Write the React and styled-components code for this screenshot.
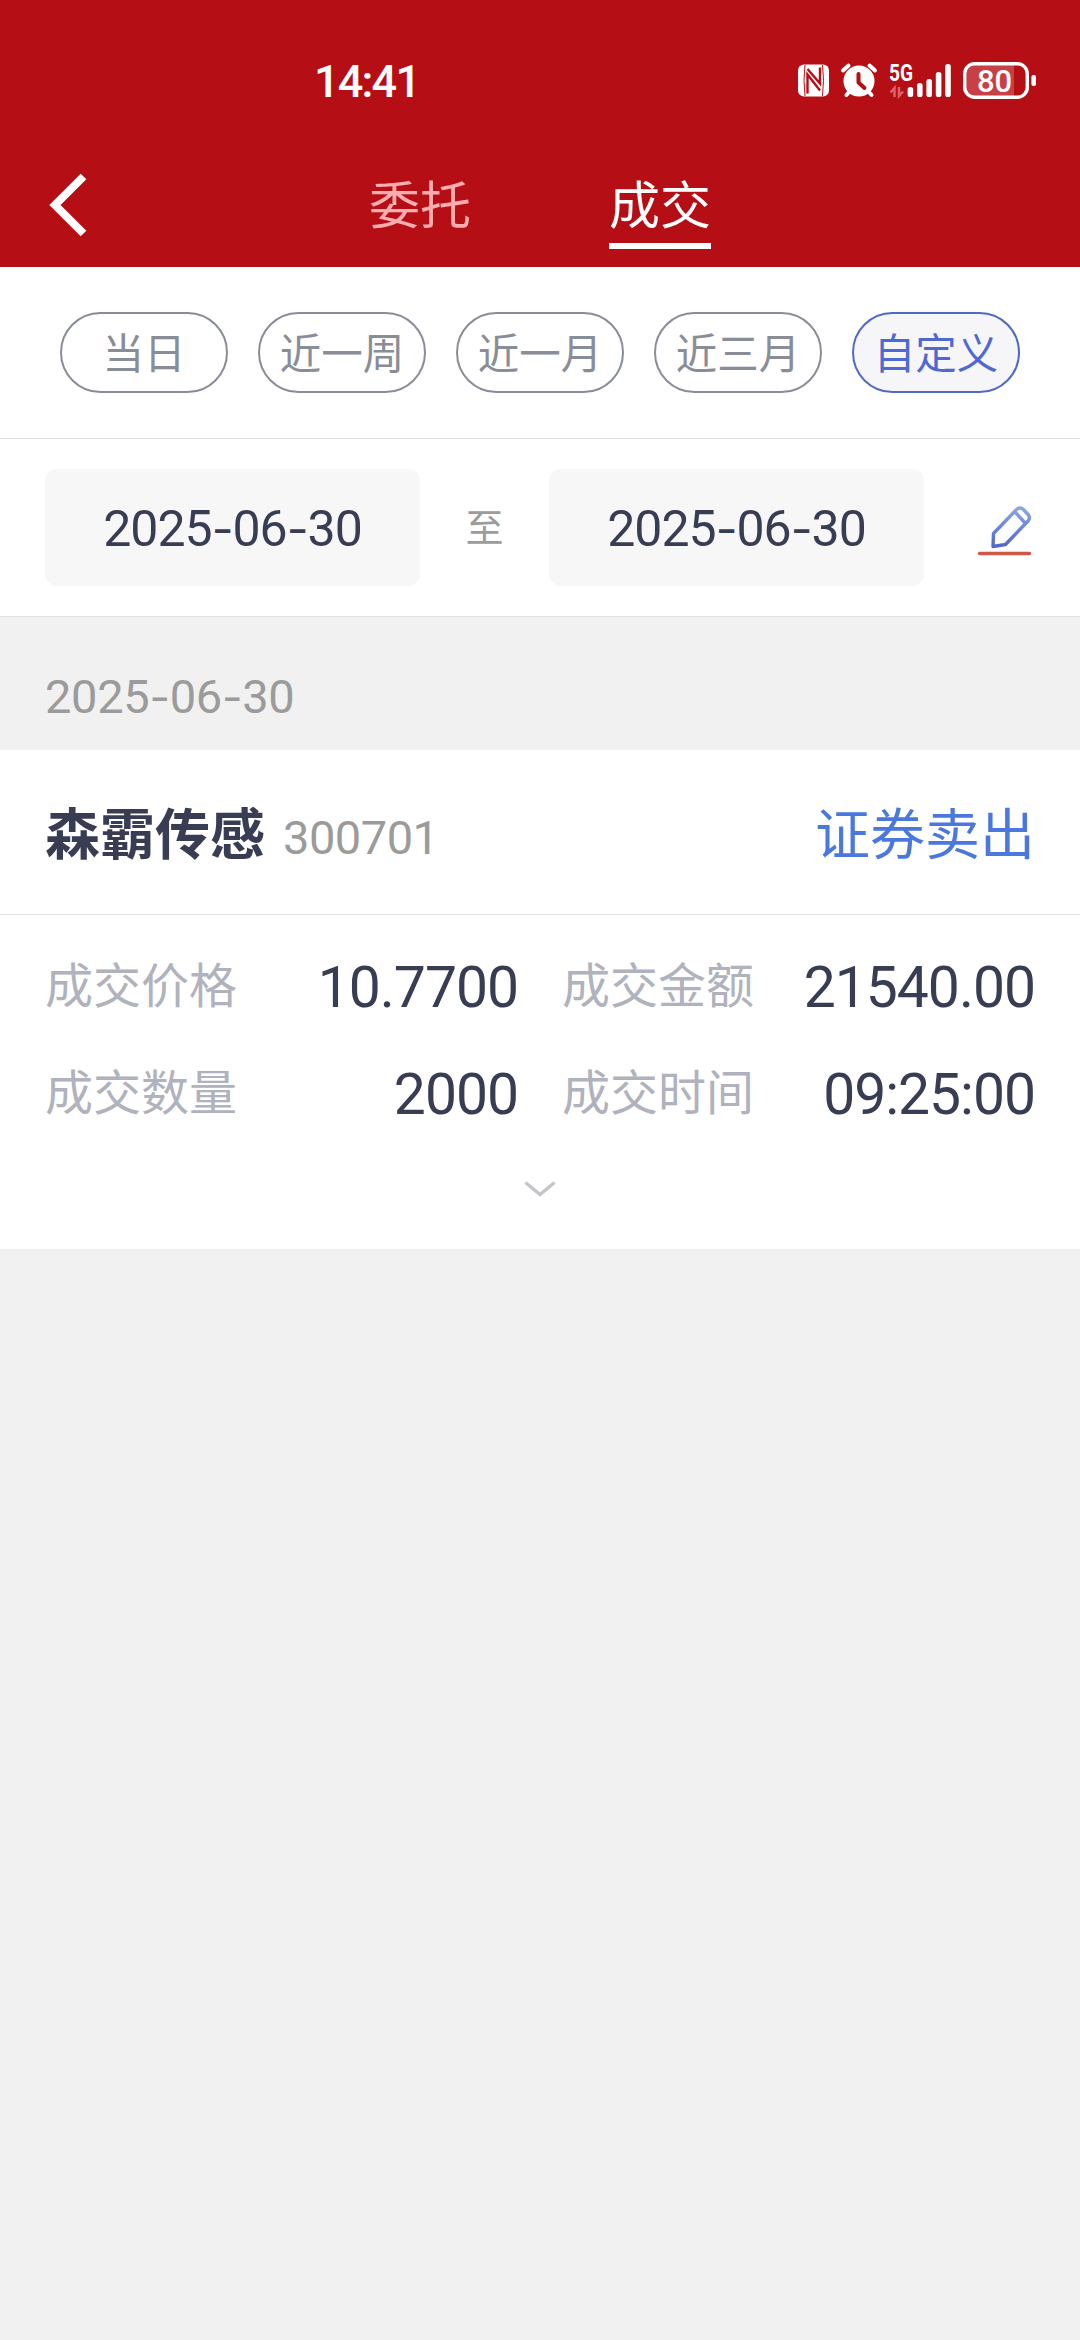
import React from 'react';
import styled, { createGlobalStyle } from 'styled-components';

const GlobalStyle = createGlobalStyle`
	* {
		box-sizing: border-box;
	}

	body {
		margin: 0;
		background-color: #f1f1f1;
		font-family: 'Noto Sans CJK SC', 'Noto Sans', sans-serif;
	}

	svg {
		display: block;
		overflow: visible;
	}
`;

const Page = styled.div`
	width: 1080px;
	min-height: 2340px;
	background-color: #f1f1f1;
`;

const Header = styled.header`
	height: 267px;
	background-color: #b50f15;
	color: white;
`;

const StatusBar = styled.div`
	height: 142px;
	padding: 18px 44px 0 314px;
	display: flex;
	justify-content: space-between;
	align-items: center;
`;

const Clock = styled.span`
	padding-top: 3px;
	font-family: Roboto, sans-serif;
	font-size: 45px;
	line-height: 60px;
	font-weight: 500;
	letter-spacing: -1.8px;
`;

const NavBar = styled.div`
	height: 125px;
	padding: 0 45px;
	display: grid;
	grid-template-columns: 1fr auto 1fr;
	align-items: center;
`;

const BackButton = styled.button`
	border: 0;
	padding: 0;
	background: none;
	justify-self: start;
`;

const Tabs = styled.nav`
	display: flex;
	gap: 138px;
	padding-bottom: 1px;
`;

const Tab = styled.a`
	height: 90px;
	font-size: 51px;
	line-height: 86px;
	color: ${({ $active }) => ($active ? 'white' : '#fbadaf')};
	border-bottom: 6px solid ${({ $active }) => ($active ? 'white' : 'transparent')};
`;

const FilterRow = styled.div`
	height: 172px;
	padding: 45px 60px 0;
	display: flex;
	gap: 30px;
	background-color: white;
	border-bottom: 1px solid #e2e3e5;
`;

const Chip = styled.button`
	width: 168px;
	height: 81px;
	padding: 0 0 4px;
	border: 2px solid ${({ $active }) => ($active ? '#5069c4' : '#898d98')};
	border-radius: 41px;
	background-color: ${({ $active }) => ($active ? '#f6f6f8' : 'white')};
	color: ${({ $active }) => ($active ? '#4e69d0' : '#898d98')};
	font-family: inherit;
	font-size: 41.5px;
	line-height: 60px;
`;

const DateRow = styled.div`
	height: 178px;
	padding: 0 45px;
	display: flex;
	align-items: center;
	background-color: white;
	border-bottom: 1px solid #e1e1e1;
`;

const DateField = styled.div`
	width: 375px;
	height: 117px;
	border-radius: 12px;
	background-color: #f7f7f8;
	color: #383d54;
	font-family: Roboto, sans-serif;
	font-size: 50px;
	line-height: 120px;
	letter-spacing: -1px;
	text-align: center;
`;

const Dash = styled.span`
	font-family: Inter, sans-serif;
	font-size: 0.95em;
	line-height: 1;
`;

const DateSeparator = styled.span`
	width: 129px;
	padding-bottom: 6px;
	text-align: center;
	font-size: 38px;
	color: #9c9c9c;
`;

const EditButton = styled.button`
	border: 0;
	padding: 5px 0 0;
	margin-left: auto;
	background: none;
`;

const GroupDate = styled.div`
	height: 133px;
	padding: 27px 45px 0;
	font-family: Roboto, sans-serif;
	font-size: 47px;
	line-height: 106px;
	letter-spacing: -0.3px;
	color: #9b9b9b;
`;

const Card = styled.section`
	height: 499px;
	background-color: white;
`;

const CardHeader = styled.div`
	height: 165px;
	padding: 0 45px;
	display: flex;
	align-items: center;
	border-bottom: 1px solid #e3e3e3;
`;

const StockName = styled.span`
	padding-bottom: 5px;
	font-size: 55px;
	line-height: 80px;
	font-weight: 700;
	color: #383d54;
`;

const StockCode = styled.span`
	margin-left: 18px;
	padding-top: 11px;
	font-family: Roboto, sans-serif;
	font-size: 47px;
	line-height: 60px;
	letter-spacing: -0.5px;
	color: #9b9b9b;
`;

const TradeType = styled.span`
	margin-left: auto;
	padding-bottom: 5px;
	font-size: 55px;
	line-height: 80px;
	color: #4b78dd;
`;

const Details = styled.div`
	padding: 17px 45px 0;
	display: grid;
	grid-template-columns: 1fr 1fr;
	grid-auto-rows: 107px;
	column-gap: 44px;
`;

const Detail = styled.div`
	display: flex;
	justify-content: space-between;
	align-items: center;
`;

const DetailLabel = styled.span`
	padding-bottom: 7px;
	font-size: 48px;
	line-height: 70px;
	color: #b0b2bd;
`;

const DetailValue = styled.span`
	padding-top: 4px;
	font-family: Roboto, sans-serif;
	font-size: 57px;
	line-height: 70px;
	letter-spacing: -1px;
	color: #383d54;
`;

const ExpandButton = styled.button`
	display: block;
	margin: 35px auto 0;
	border: 0;
	padding: 0;
	background: none;
`;

const filters = ['当日', '近一周', '近一月', '近三月', '自定义'];

const details = [
	{ label: '成交价格', value: '10.7700' },
	{ label: '成交金额', value: '21540.00' },
	{ label: '成交数量', value: '2000' },
	{ label: '成交时间', value: '09:25:00' },
];

const signalBars = [
	{ x: 111.6, y: 27 },
	{ x: 121, y: 23 },
	{ x: 130.4, y: 19 },
	{ x: 139.8, y: 12 },
	{ x: 149.2, y: 4 },
];

function StatusIcons() {
	return (
		<svg width="240" height="40" viewBox="0 0 240 40" fill="none">
			{/* nfc */}
			<rect x="2" y="4.5" width="31" height="32" rx="6" fill="white" />
			<path d="M11.5 33.5V14.5L24 30.500" stroke="#b50f15" strokeWidth="2.400" />
			<path d="M24 7.500V23.500L11.500 9" stroke="#b50f15" strokeWidth="2.400" />
			<path d="M9 5Q7 20 9 36M26.500 5Q28.500 20 26.500 36" stroke="#b50f15" strokeWidth="1" />
			{/* alarm */}
			<circle cx="63" cy="21" r="15.5" fill="white" />
			<path d="M47 10.5L52.5 5.5M79 10.5L73.5 5.5M50.500 35L54 31M75.500 35L72 31" stroke="white" strokeWidth="4" strokeLinecap="round" />
			<path d="M62.500 14V22.500L68.500 28" stroke="#b50f15" strokeWidth="4" strokeLinecap="round" strokeLinejoin="round" />
			{/* mobile signal */}
			<text x="93" y="21" fill="white" fontFamily="Roboto, sans-serif" fontSize="23" fontWeight="700" textLength="24" lengthAdjust="spacingAndGlyphs">
				5G
			</text>
			<path d="M98.500 37V28L94.500 32.500M103 27V36L107 31.500" stroke="#d9626a" strokeWidth="2.500" />
			{signalBars.map((bar) => (
				<rect key={bar.x} x={bar.x} y={bar.y} width="5.600" height={37 - bar.y} rx="2.600" fill="white" />
			))}
			{/* battery */}
			<path d="M176 5H218V36H176A8 8 0 0 1 169 29V12A8 8 0 0 1 176 5Z" fill="#c64046" />
			<rect x="168.700" y="3.700" width="62.600" height="33.600" rx="10" stroke="white" strokeWidth="3.400" />
			<rect x="235.400" y="15" width="4.600" height="11" rx="2" fill="white" />
			<text x="198.500" y="31.500" fill="white" fontFamily="Roboto, sans-serif" fontSize="31" fontWeight="500" textAnchor="middle">
				80
			</text>
		</svg>
	);
}

function BackIcon() {
	return (
		<svg width="45" height="64" viewBox="0 0 45 64" fill="none">
			<path d="M38.500 3.500L10 32L38.500 60.500" stroke="white" strokeWidth="8" />
		</svg>
	);
}

function EditIcon() {
	return (
		<svg width="60" height="56" viewBox="0 0 60 56" fill="none">
			<defs>
				<linearGradient id="pencil" x1="0" y1="0" x2="0" y2="1">
					<stop offset="0" stopColor="#8ba6e6" />
					<stop offset="1" stopColor="#5068cc" />
				</linearGradient>
			</defs>
			<path
				d="M18 44.500L18.500 31.500L41.500 7.500Q45 4.500 48.500 7.500L53.500 13Q55.500 16 53 19L30.500 42.500Z M40 10L50.500 21.500"
				stroke="url(#pencil)"
				strokeWidth="3.400"
				strokeLinejoin="round"
			/>
			<path d="M4.500 51.500H54.500" stroke="#d05846" strokeWidth="3.400" strokeLinecap="round" />
		</svg>
	);
}

function DateText({ value }) {
	const [year, month, day] = value.split('-');
	return (
		<>
			{year}
			<Dash>-</Dash>
			{month}
			<Dash>-</Dash>
			{day}
		</>
	);
}

export default function App() {
	return (
		<>
			<GlobalStyle />
			<Page>
				<Header>
					<StatusBar>
						<Clock>14:41</Clock>
						<StatusIcons />
					</StatusBar>
					<NavBar>
						<BackButton>
							<BackIcon />
						</BackButton>
						<Tabs>
							<Tab>委托</Tab>
							<Tab $active>成交</Tab>
						</Tabs>
					</NavBar>
				</Header>
				<FilterRow>
					{filters.map((name) => (
						<Chip key={name} $active={name === '自定义'}>
							{name}
						</Chip>
					))}
				</FilterRow>
				<DateRow>
					<DateField>
						<DateText value="2025-06-30" />
					</DateField>
					<DateSeparator>至</DateSeparator>
					<DateField>
						<DateText value="2025-06-30" />
					</DateField>
					<EditButton>
						<EditIcon />
					</EditButton>
				</DateRow>
				<GroupDate>
					<DateText value="2025-06-30" />
				</GroupDate>
				<Card>
					<CardHeader>
						<StockName>森霸传感</StockName>
						<StockCode>300701</StockCode>
						<TradeType>证券卖出</TradeType>
					</CardHeader>
					<Details>
						{details.map(({ label, value }) => (
							<Detail key={label}>
								<DetailLabel>{label}</DetailLabel>
								<DetailValue>{value}</DetailValue>
							</Detail>
						))}
					</Details>
					<ExpandButton>
						<svg width="32" height="17" viewBox="0 0 32 17" fill="none">
							<path d="M1.500 1.500L16 13.500L30.500 1.500" stroke="#c4c5cb" strokeWidth="3.400" />
						</svg>
					</ExpandButton>
				</Card>
			</Page>
		</>
	);
}
